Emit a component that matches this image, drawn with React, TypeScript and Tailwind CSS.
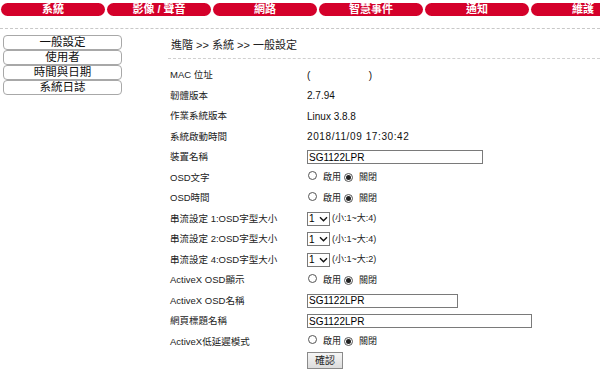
import React from "react";

const tabs = ["系統", "影像 / 聲音", "網路", "智慧事件", "通知", "維護"];
const sideItems = ["一般設定", "使用者", "時間與日期", "系統日誌"];

const font = { fontFamily: '"Liberation Sans", "Noto Sans CJK TC", sans-serif' };

function Radio({ checked }: { checked?: boolean }) {
  return (
    <span className="inline-flex h-[9px] w-[9px] items-center justify-center rounded-full border border-[#555] bg-white">
      {checked && <span className="h-[5px] w-[5px] rounded-full bg-[#222]" />}
    </span>
  );
}

function OnOff() {
  return (
    <div className="flex items-center gap-[3px] text-[9px] text-[#222]">
      <span className="ml-[1px]"><Radio /></span>
      <span className="ml-[3px]">啟用</span>
      <Radio checked />
      <span className="ml-[3px]">關閉</span>
    </div>
  );
}

function TextBox({ w, value }: { w: string; value: string }) {
  return (
    <div className={`flex h-[14px] items-center border border-[#7a7a7a] bg-white pl-[1px] text-[10px] text-black ${w}`}>
      {value}
    </div>
  );
}

function SizeSelect({ hint }: { hint: string }) {
  return (
    <div className="flex items-center gap-[2px] text-[9px] text-[#222]">
      <div className="flex h-[14px] w-[23px] items-center justify-between border border-[#7a7a7a] bg-white px-[1px] text-[10px] text-black">
        <span>1</span>
        <svg width="9" height="6" viewBox="0 0 9 6">
          <path d="M1 1.2 L4.5 4.7 L8 1.2" fill="none" stroke="#111" strokeWidth="1.4" />
        </svg>
      </div>
      <span>{hint}</span>
    </div>
  );
}

const rows: { label: string; value: React.ReactNode }[] = [
  { label: "MAC 位址", value: <span className="text-[10px]">(&nbsp;&nbsp;&nbsp;&nbsp;&nbsp;&nbsp;&nbsp;&nbsp;&nbsp;&nbsp;&nbsp;&nbsp;&nbsp;&nbsp;&nbsp;&nbsp;&nbsp;&nbsp;&nbsp;&nbsp;&nbsp;)</span> },
  { label: "韌體版本", value: "2.7.94" },
  { label: "作業系統版本", value: "Linux 3.8.8" },
  { label: "系統啟動時間", value: <span className="tracking-[0.6px]">2018/11/09 17:30:42</span> },
  { label: "裝置名稱", value: <TextBox w="w-[176px]" value="SG1122LPR" /> },
  { label: "OSD文字", value: <OnOff /> },
  { label: "OSD時間", value: <OnOff /> },
  { label: "串流設定 1:OSD字型大小", value: <SizeSelect hint="(小:1~大:4)" /> },
  { label: "串流設定 2:OSD字型大小", value: <SizeSelect hint="(小:1~大:4)" /> },
  { label: "串流設定 4:OSD字型大小", value: <SizeSelect hint="(小:1~大:2)" /> },
  { label: "ActiveX OSD顯示", value: <OnOff /> },
  { label: "ActiveX OSD名稱", value: <TextBox w="w-[151px]" value="SG1122LPR" /> },
  { label: "網頁標題名稱", value: <TextBox w="w-[225px]" value="SG1122LPR" /> },
  { label: "ActiveX低延遲模式", value: <OnOff /> },
];

export default function App() {
  return (
    <div className="h-[373px] w-[600px] overflow-hidden bg-white" style={font}>
      <div className="flex gap-[2px] pl-[1px] pt-[3px]">
        {tabs.map((t) => (
          <div
            key={t}
            className="flex h-[13px] w-[104px] shrink-0 items-center justify-center rounded-full bg-[#d4002a] text-[11px] font-bold leading-none text-white"
          >
            {t}
          </div>
        ))}
      </div>
      <div className="mt-[12px] border-t border-dashed border-[#c8c8c8]" />

      <div className="flex">
        <div className="ml-[3px] mt-[6px] flex w-[119px] flex-col">
          {sideItems.map((s) => (
            <div
              key={s}
              className="flex h-[15px] items-center justify-center rounded-[4px] border border-[#a8a8a8] bg-white text-[11.5px] leading-none text-[#111]"
            >
              {s}
            </div>
          ))}
        </div>

        <div className="ml-[46px] flex-1">
          <div className="flex h-[29px] items-center pl-[3px] pt-[3px] text-[11px] text-[#222]">
            進階 &gt;&gt; 系統 &gt;&gt; 一般設定
          </div>
          <div className="border-t border-dashed border-[#d0d0d0]" />
          <div className="mt-[6px] pl-[2px]">
            {rows.map((r) => (
              <div key={r.label} className="grid h-[20.5px] grid-cols-[137px_1fr] items-center">
                <div className="text-[9.5px] text-[#222]">{r.label}</div>
                <div className="text-[10px] text-[#111]">{r.value}</div>
              </div>
            ))}
            <div className="flex h-[20px] items-start pl-[137px]">
              <button className="flex h-[17px] w-[36px] items-center justify-center border border-[#8a8a8a] bg-gradient-to-b from-[#f6f6f6] to-[#dcdcdc] text-[10px] leading-none text-[#222]">
                確認
              </button>
            </div>
          </div>
        </div>
      </div>
    </div>
  );
}
